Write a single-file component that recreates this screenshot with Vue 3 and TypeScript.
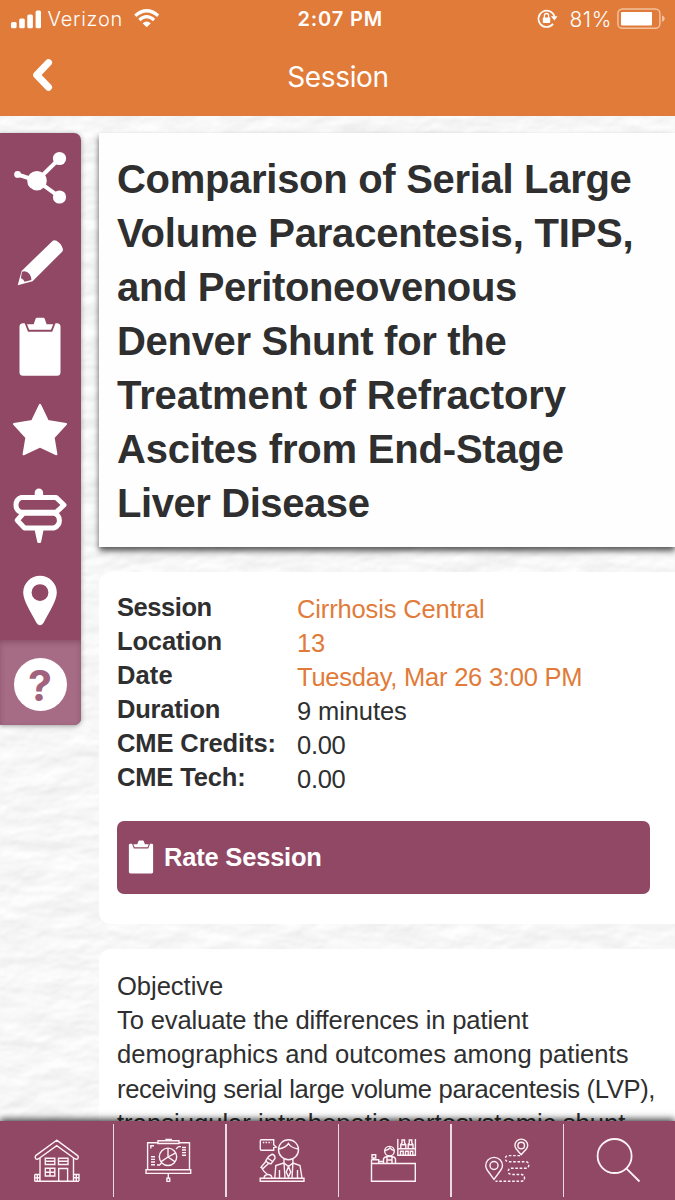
<script setup lang="ts">
interface Line {
  text: string
  tracking: number
}

interface Detail {
  label: string
  labelTracking: number
  value: string
  valueTracking: number
  link?: boolean
}

const titleLines: Line[] = [
  { text: 'Comparison of Serial Large', tracking: -0.3 },
  { text: 'Volume Paracentesis, TIPS,', tracking: -0.2 },
  { text: 'and Peritoneovenous', tracking: -0.36 },
  { text: 'Denver Shunt for the', tracking: -0.31 },
  { text: 'Treatment of Refractory', tracking: -0.1 },
  { text: 'Ascites from End-Stage', tracking: -0.2 },
  { text: 'Liver Disease', tracking: -0.42 },
]

const details: Detail[] = [
  { label: 'Session', labelTracking: -0.45, value: 'Cirrhosis Central', valueTracking: -0.14, link: true },
  { label: 'Location', labelTracking: -0.15, value: '13', valueTracking: -0.2, link: true },
  { label: 'Date', labelTracking: 0.1, value: 'Tuesday, Mar 26 3:00 PM', valueTracking: -0.23, link: true },
  { label: 'Duration', labelTracking: -0.2, value: '9 minutes', valueTracking: -0.1 },
  { label: 'CME Credits:', labelTracking: -0.1, value: '0.00', valueTracking: -0.3 },
  { label: 'CME Tech:', labelTracking: -0.15, value: '0.00', valueTracking: -0.3 },
]

const abstractLines: Line[] = [
  { text: 'Objective', tracking: -0.05 },
  { text: 'To evaluate the differences in patient', tracking: -0.14 },
  { text: 'demographics and outcomes among patients', tracking: 0.02 },
  { text: 'receiving serial large volume paracentesis (LVP),', tracking: -0.33 },
  { text: 'transjugular intrahepatic portosystemic shunt', tracking: 0.01 },
]
</script>

<template>
  <div class="screen">
    <svg class="paper" width="675" height="1200" aria-hidden="true">
      <filter id="paper-grain" x="0" y="0" width="100%" height="100%" color-interpolation-filters="sRGB">
        <feTurbulence type="fractalNoise" baseFrequency="0.022 0.045" numOctaves="4" seed="11" result="n" />
        <feDiffuseLighting in="n" surfaceScale="0.6" diffuseConstant="1.135" lighting-color="#fbfbfb">
          <feDistantLight azimuth="245" elevation="60" />
        </feDiffuseLighting>
        <feGaussianBlur stdDeviation="0.9" />
      </filter>
      <rect width="675" height="1200" filter="url(#paper-grain)" />
    </svg>

    <header class="top">
      <div class="status">
        <div class="side">
          <svg class="signal" width="31" height="19" viewBox="0 0 31 19" fill="#fff">
            <rect x="0" y="12" width="5.6" height="6.3" rx="1.5" />
            <rect x="8.2" y="8.6" width="5.6" height="9.7" rx="1.5" />
            <rect x="16.3" y="4.6" width="5.6" height="13.7" rx="1.5" />
            <rect x="24.6" y="0.4" width="5.4" height="17.9" rx="1.5" />
          </svg>
          <span class="carrier">Verizon</span>
          <svg class="wifi" width="26" height="19" viewBox="0 0 26 19" fill="none" stroke="#fff">
            <path d="M1.3 6.8Q12.7-3.2 24.1 6.8" stroke-width="3.3" />
            <path d="M5.3 11Q12.7 4.4 20.1 11" stroke-width="3.2" />
            <path d="M8.6 14.3Q12.7 10.5 16.8 14.3L12.7 18.3Z" fill="#fff" stroke="none" />
          </svg>
        </div>
        <span class="clock">2:07 PM</span>
        <div class="side end">
          <svg class="lock" width="21" height="20" viewBox="0 0 21 20" fill="none" stroke="#fff">
            <path d="M17.5 7.4A8.2 8.2 0 1 0 16.1 14.9" stroke-width="1.7" />
            <path d="M13.9 7.2H20.5L17.4 11.6Z" fill="#fff" stroke="none" />
            <rect x="5.8" y="8.4" width="7.4" height="5.6" rx=".8" fill="#fff" stroke="none" />
            <path d="M7.4 9V6.6a2.1 2.1 0 0 1 4.2 0V9" stroke-width="1.3" />
          </svg>
          <span class="percent">81%</span>
          <svg class="battery" width="49" height="22" viewBox="0 0 49 22" fill="none">
            <rect x=".9" y=".9" width="42" height="19.4" rx="4.6" stroke="#f2c19d" stroke-width="1.5" />
            <rect x="4" y="3.9" width="31" height="13.6" rx="1" fill="#fff" />
            <path d="M45 7.2Q47.8 8.4 47.8 10.6T45 14Z" fill="#f2c19d" />
          </svg>
        </div>
      </div>
      <div class="nav">
        <svg class="back" width="24" height="34" viewBox="0 0 24 34" fill="none" stroke="#fff">
          <path d="M18.5 4.6L6.7 17L18.5 29.2" stroke-width="7" stroke-linecap="round" stroke-linejoin="round" />
        </svg>
        <h1>Session</h1>
      </div>
    </header>

    <div class="body">
      <aside class="rail">
        <div class="tool">
          <svg viewBox="0 133 81 84.57" fill="#fff" stroke="#fff">
            <path d="M17.5 174.5L37 180.7L59.5 158.5M37 180.7L59.5 197" fill="none" stroke-width="4" />
            <g stroke="none">
              <circle cx="37" cy="180.7" r="9.8" /><circle cx="59.5" cy="158.5" r="6.6" />
              <circle cx="59.5" cy="197" r="6.6" /><circle cx="17.6" cy="174.4" r="3.4" />
            </g>
          </svg>
        </div>
        <div class="tool">
          <svg viewBox="0 217.57 81 84.57">
            <path d="M52.8 240.2Q54.2 239.2 56.5 240.4Q61.6 243.5 62.8 248.4Q63.2 250.2 62.2 251.2L32.6 280.8L17.7 284.8L21.6 270.6Z" fill="#fff" />
            <path d="M22 271.3Q26.3 269.5 29.5 273.5Q31.5 276.3 31.4 279.7L24.6 281.3Q23.8 279.2 20.9 277.7Z" fill="#914865" />
          </svg>
        </div>
        <div class="tool">
          <svg viewBox="0 302.14 81 84.57">
            <rect x="19.5" y="323.5" width="41" height="52.5" rx="3.5" fill="#fff" />
            <path d="M24.3 322.5L28 332H52.2L55.9 322.5Z" fill="#914865" />
            <path d="M27 324.3H33.7L35.6 319Q36 318 37 318H43.3Q44.3 318 44.7 319L46.6 324.3H53.2L51 329.8H29.2Z" fill="#fff" />
          </svg>
        </div>
        <div class="tool">
          <svg viewBox="0 386.71 81 84.57">
            <path d="M40 404.5L47.8 420.7L66 423.8L53.6 437.2L56.4 454L40 446.4L23.6 454L26.4 437.2L14 423.8L32.2 420.7Z" fill="#fff" stroke="#fff" stroke-width="2" stroke-linejoin="round" />
          </svg>
        </div>
        <div class="tool">
          <svg viewBox="0 471.28 81 84.57" fill="none" stroke="#fff">
            <path d="M34.7 496V493a4.2 4.2 0 0 1 8.4 0V496ZM34.6 530H43.6L41 542.7Q39.2 543.8 37.4 542.7Z" fill="#fff" stroke="none" />
            <path d="M21.5 497.7H56L64 505.3L56 512.6H21.5Q16 511 16 505.3T21.5 497.7Z" stroke-width="5" stroke-linejoin="round" />
            <path d="M54 513.5H23.5L17.2 520.5L24.5 528.2H54Q59.4 526 59.4 520.7T54 513.5Z" stroke-width="5" stroke-linejoin="round" />
          </svg>
        </div>
        <div class="tool">
          <svg viewBox="0 555.85 81 84.57">
            <path fill="#fff" fill-rule="evenodd" d="M40 575.6A16.8 16.8 0 0 1 56.8 592.4C56.8 600.5 49 612.5 43.6 622.6Q40 627.6 36.4 622.6C31 612.5 23.2 600.5 23.2 592.4A16.8 16.8 0 0 1 40 575.6ZM40 584a8.4 8.4 0 1 0 0 16.8a8.4 8.4 0 1 0 0-16.8Z" />
          </svg>
        </div>
        <div class="tool active">
          <div class="help">?</div>
        </div>
      </aside>

      <main class="content">
        <section class="title-card">
          <h2>
            <span v-for="line in titleLines" :key="line.text" :style="{ letterSpacing: line.tracking + 'px' }">{{ line.text }}</span>
          </h2>
        </section>

        <section class="card info">
          <dl>
            <div v-for="d in details" :key="d.label" class="row">
              <dt :style="{ letterSpacing: d.labelTracking + 'px' }">{{ d.label }}</dt>
              <dd :class="{ link: d.link }" :style="{ letterSpacing: d.valueTracking + 'px' }">{{ d.value }}</dd>
            </div>
          </dl>
          <button class="rate" type="button">
            <svg width="26" height="34" viewBox="18 317 44 60" preserveAspectRatio="none">
              <rect x="19.5" y="323.5" width="41" height="52.5" rx="2.5" fill="#fff" />
              <path d="M24.3 322.5L28 332H52.2L55.9 322.5Z" fill="#914865" />
              <path d="M27 324.3H33.7L35.6 319Q36 318 37 318H43.3Q44.3 318 44.7 319L46.6 324.3H53.2L51 329.8H29.2Z" fill="#fff" />
            </svg>
            <span>Rate Session</span>
          </button>
        </section>

        <section class="card abstract">
          <p>
            <span v-for="line in abstractLines" :key="line.text" :style="{ letterSpacing: line.tracking + 'px' }">{{ line.text }}</span>
          </p>
        </section>
      </main>
    </div>

    <nav class="tabs">
      <div class="tab">
        <svg viewBox="0 1121 113 79">
          <path d="M56.7 1140.2L35.7 1155.6Q34.6 1157 35.6 1158.7Q37 1159.8 38.6 1158.7L56.7 1145.6L74.8 1158.7Q76.5 1159.8 77.8 1158.7Q79 1157 77.6 1155.6Z" />
          <path d="M40 1158V1181.2M73.5 1158V1181.2M34.5 1181.2H79M34.7 1174.5H39.8V1181M37.3 1174.5V1181M34.7 1174.5V1181M34.7 1177.7H39.8M73.8 1174.5H79V1181M76.3 1174.5V1181M73.8 1177.7H79" />
          <path d="M45.3 1158.3H54.8V1164.5H45.3ZM45.3 1161.3H54.8M58.5 1158.3H68V1164.5H58.5ZM58.5 1161.3H68M45.3 1168.3H54.8V1176H45.3ZM50 1168.3V1176M45.3 1172.2H54.8M58.7 1181V1168.5H67.6V1181" />
        </svg>
      </div>
      <div class="tab">
        <svg viewBox="113 1121 112.5 79">
          <path d="M158 1142.7H147.6V1169.5M179 1142.7H189.5V1169.5M158 1140.7H179V1143.5H158ZM166 1140.3V1139.5H171.2V1140.3M146 1169.7H190.7V1173.4H146ZM168.3 1173.5V1178.5M166.9 1178.3H169.7V1181.4H166.9Z" />
          <circle cx="168" cy="1156.8" r="8.7" />
          <path d="M168 1148.2V1157L160.8 1161.8M168 1157L175.2 1161.8M168 1157L175.8 1152.8M150.8 1148.5V1145.7H154M176 1149L178.5 1146.6H181M182 1147.5H186M182 1150H186M182 1152.6H186M182 1155.2H186M151 1156.8H155M151 1159.4H155M151 1162H155M151 1164.7H155M157 1165H159.5L161.5 1163" />
        </svg>
      </div>
      <div class="tab">
        <svg viewBox="225.5 1121 112.5 79">
          <path d="M260.8 1139.7H273.2V1144.8L275.6 1147L273.2 1147.5V1150.3H260.8Q259.8 1150.3 259.8 1149V1141Q259.8 1139.7 260.8 1139.7Z" />
          <path d="M262.3 1142.5H271" stroke-dasharray="1.5 1.3" />
          <circle cx="288" cy="1149.7" r="10" />
          <path d="M278 1149Q285 1148 288 1143.5Q290.5 1148 298 1149M283.5 1159V1163L275.3 1165.5L274.3 1178M292.4 1159V1163L299.5 1165.5L301.5 1178M283.5 1163L284.5 1178M292.4 1163L291.5 1178M283.5 1163L288 1166.5L292.4 1163M288 1166.5L285.8 1172L288 1177L290.2 1172ZM279 1170V1178M297 1170V1178M259.7 1178.3H303.5V1181.2H259.7Z" />
          <path d="M268.2 1156.3L271.6 1154.3Q274.8 1155 274.5 1158.5L270.5 1163.8Q267 1164 265.3 1160.5ZM267 1158L272.8 1162M265.5 1161.3L260.5 1167.3L262.5 1168.6L268 1163.5M261.5 1168.5Q263.5 1172 266.5 1174M263.5 1178Q264 1174.5 267.5 1174.5T271.5 1178" />
        </svg>
      </div>
      <div class="tab">
        <svg viewBox="338 1121 112.5 79">
          <path d="M371.5 1163.5H415.3V1181.3H371.5ZM371.5 1159.8H378.7V1163.2M371.5 1163V1159.5M372 1154.8H375.7V1158H372ZM373.8 1158V1159.7M378.7 1161.5H384" />
          <circle cx="389.5" cy="1151.2" r="4.8" />
          <path d="M384.8 1150.5Q388.5 1150 390 1148Q391.5 1150 394.2 1150.5M383.5 1163V1158.8Q384 1157 387 1156.5H392Q395 1157 395.5 1159V1163M387 1156.5V1163M392 1156.5V1163M387 1160H392" />
          <path d="M397.8 1139V1155.3H415.4V1139M397.8 1148.7H415.4M400.8 1148.5V1144.5L402 1143V1140H404.5V1143L405.8 1144.5V1148.5M408.2 1148.5V1144.5L409.3 1143V1140H411.8V1143L413 1144.5V1148.5M400.8 1144.8H405.8M408.2 1144.8H413M400.5 1155V1151.3H403.2V1155M405.5 1155V1151.3H408.2V1155M410.3 1155V1151.3H412.8V1155" />
        </svg>
      </div>
      <div class="tab">
        <svg viewBox="450.5 1121 112.5 79">
          <path d="M493.5 1179.3L487 1170.5Q485.2 1167.8 485.2 1165.8A8.4 8.4 0 0 1 502 1165.8Q502 1167.8 500 1170.5Z" />
          <circle cx="493.5" cy="1165.5" r="4" />
          <path d="M520.7 1154.8L515.8 1149Q514.4 1147 514.4 1145.5A6.4 6.4 0 0 1 527.2 1145.5Q527.2 1147 525.8 1149Z" />
          <circle cx="520.7" cy="1145.5" r="3.3" />
          <path d="M519.5 1155.6H508Q504.8 1156 504.8 1158.6T508 1161.7H525Q528.3 1162 528.3 1165T525 1168.2H511Q507.7 1168.5 507.7 1171.3T511 1174.5H521Q524 1175 524 1178T521 1181.2H495" stroke-dasharray="2.6 1.7" />
        </svg>
      </div>
      <div class="tab">
        <svg class="search" viewBox="563 1121 112 79">
          <circle cx="614.6" cy="1156" r="17" />
          <path d="M626.3 1168.3L639.5 1181.5" />
        </svg>
      </div>
    </nav>
  </div>
</template>

<style>
html,
body {
  margin: 0;
  overflow: hidden;
}
</style>

<style scoped>
.screen {
  position: relative;
  display: flex;
  flex-direction: column;
  width: 675px;
  height: 1200px;
  overflow: hidden;
  color: #2f2f30;
  background: #f5f5f5;
  font-family: "Liberation Sans", Arial, sans-serif;
}
.paper {
  position: absolute;
  inset: 0;
}
.top {
  position: relative;
  box-sizing: border-box;
  height: 115.5px;
  flex: none;
  background: #e17b39;
  color: #fff;
  font-family: Inter, sans-serif;
}
.status {
  display: grid;
  grid-template-columns: 1fr auto 1fr;
  height: 38px;
  align-items: center;
  padding: 0 10px 0 10.5px;
  font-size: 20px;
}
.side {
  display: flex;
  align-items: center;
}
.side.end {
  justify-content: flex-end;
}
.signal {
  margin-right: 6px;
}
.carrier {
  font-weight: 300;
  letter-spacing: 0.75px;
}
.wifi {
  margin-left: 11px;
  margin-top: -1px;
}
.clock {
  margin-left: 5px;
  font-weight: 600;
  letter-spacing: 0.85px;
}
.lock {
  margin-right: 11.5px;
}
.percent {
  font-weight: 300;
  font-size: 21px;
  letter-spacing: 0.6px;
  margin-right: 5px;
}
.battery {
  margin-right: -1px;
}
.nav {
  display: grid;
  grid-template-columns: 1fr auto 1fr;
  height: 77px;
  align-items: center;
}
.back {
  margin-left: 30px;
  margin-top: -4px;
}
h1 {
  margin: 0 0 0 1px;
  font-size: 28px;
  font-weight: 400;
  line-height: 34px;
  letter-spacing: -0.35px;
}
.body {
  position: relative;
  display: flex;
  align-items: flex-start;
  gap: 18px;
  padding-top: 17.5px;
  height: 988px;
}
.rail {
  flex: none;
  width: 81px;
  height: 592px;
  display: flex;
  flex-direction: column;
  overflow: hidden;
  background: #914865;
  border-radius: 0 7px 7px 0;
  box-shadow: 0 1px 5px rgba(0, 0, 0, 0.35);
}
.tool {
  flex: 1;
  display: flex;
  align-items: center;
  justify-content: center;
  min-height: 0;
}
.tool svg {
  display: block;
  width: 81px;
  height: 84.57px;
}
.tool.active {
  background: #a66c85;
  box-shadow: inset 0 3px 6px -1px rgba(90, 30, 60, 0.4);
}
.help {
  width: 53px;
  height: 53px;
  margin: 4px 0 0 -1px;
  border-radius: 50%;
  background: #fff;
  color: #a0627d;
  font: 700 43px/54px Inter, sans-serif;
  text-align: center;
}
.content {
  flex: 1;
  min-width: 0;
}
.title-card {
  box-sizing: border-box;
  height: 414px;
  padding: 19px 0 0 18px;
  background: #fefefe;
  box-shadow: 0 4px 6px rgba(0, 0, 0, 0.65);
}
h2 {
  margin: 0;
  font-size: 40px;
  line-height: 54px;
}
h2 span,
p span {
  display: block;
  white-space: nowrap;
}
.card {
  box-sizing: border-box;
  margin-top: 25px;
  background: #fff;
  border-radius: 12px 0 0 12px;
}
.info {
  height: 352px;
  padding: 18px 25px 0 18px;
}
dl {
  margin: 0;
}
.row {
  display: flex;
  height: 34.1px;
  line-height: 34px;
}
dt {
  width: 180px;
  font-size: 25.5px;
  font-weight: 700;
  white-space: nowrap;
}
dd {
  margin: 1.6px 0 0;
  font-size: 25.5px;
  white-space: nowrap;
}
dd.link {
  color: #e17b39;
}
.rate {
  display: flex;
  align-items: center;
  width: 533px;
  height: 73.5px;
  margin: 26px 0 0;
  padding: 0 0 0 11px;
  border: 0;
  border-radius: 7px;
  background: #914865;
  color: #fff;
  font: 700 25.5px "Liberation Sans", Arial, sans-serif;
}
.rate span {
  margin-left: 10px;
  letter-spacing: -0.2px;
}
.abstract {
  height: 300px;
  padding: 20px 0 0 18px;
}
p {
  margin: 0;
  font-size: 25.6px;
  line-height: 34.2px;
}
.tabs {
  position: relative;
  flex: none;
  margin-top: auto;
  display: grid;
  grid-template-columns: 113px repeat(4, 112.5px) 112px;
  height: 79px;
  background: #914865;
  box-shadow: 0 -2px 7px rgba(0, 0, 0, 0.75);
}
.tab {
  display: flex;
  align-items: center;
}
.tab svg {
  flex: 1;
  min-width: 0;
  height: 79px;
  fill: none;
  stroke: #fdf2f6;
  stroke-width: 1.4;
}
.tab svg.search {
  stroke-width: 1.8;
}
.tab + .tab::before {
  content: "";
  width: 1.5px;
  height: 73px;
  margin-left: -0.5px;
  margin-right: -1px;
  background: #eadbe2;
}
</style>
